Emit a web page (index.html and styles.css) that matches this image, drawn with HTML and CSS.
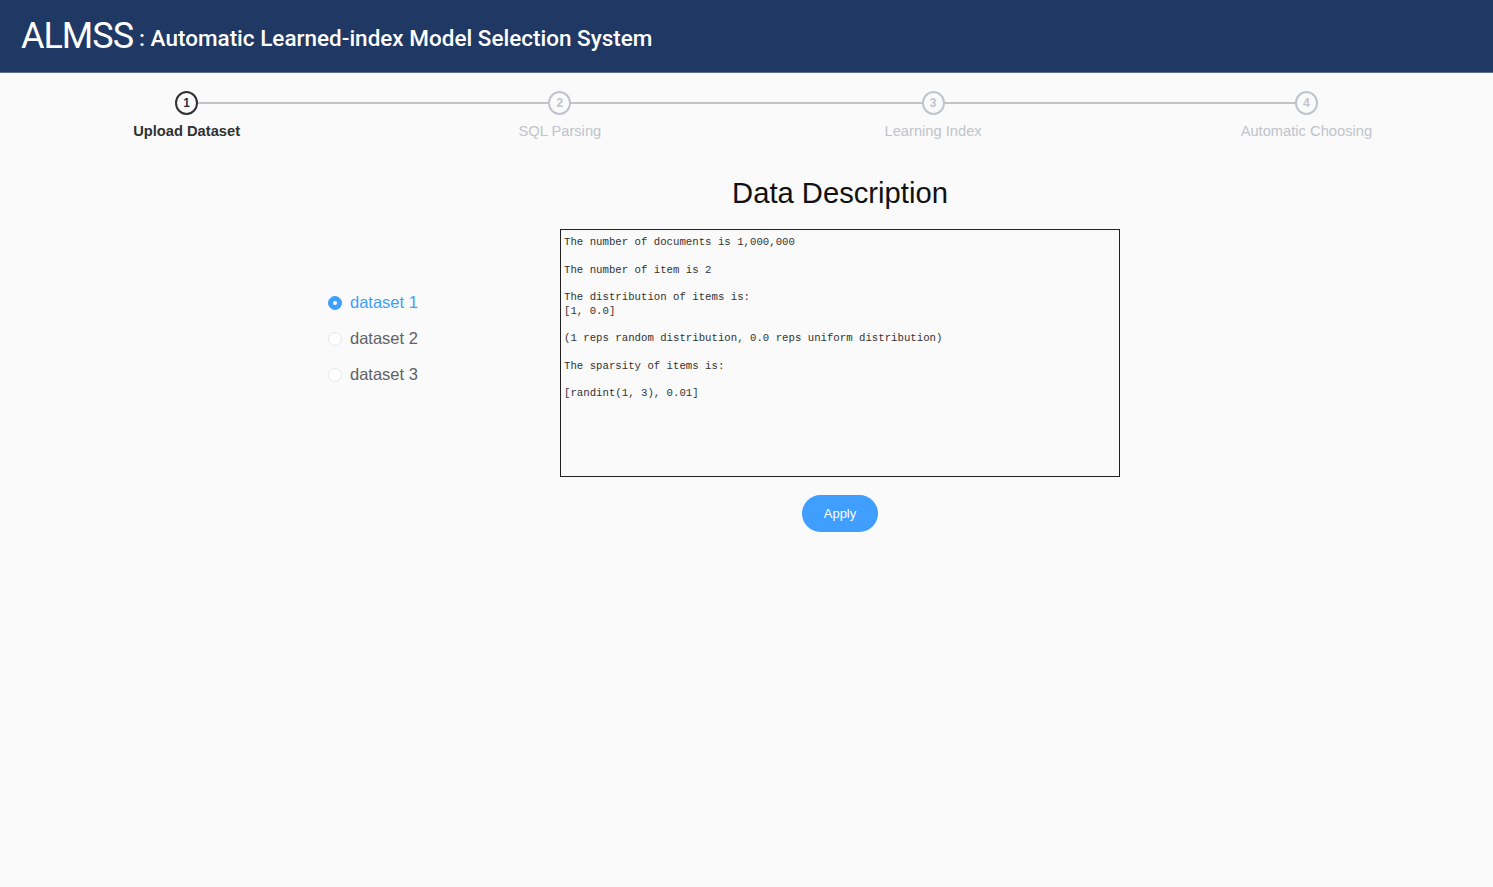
FILE: index.html
```html
<!doctype html>
<html lang="en">
    <head>
        <meta charset="UTF-8" />
        <meta name="viewport" content="width=device-width, initial-scale=1.0" />
        <title>ALMSS</title>
        <link rel="stylesheet" href="styles.css">
    </head>
    <body>
        <header class="top-bar">
            <span class="brand">ALMSS</span>
            <span class="tagline">: Automatic Learned-index Model Selection System</span>
        </header>

        <ol class="steps">
            <li class="step active">
                <span class="step-icon">1</span>
                <span class="step-title">Upload Dataset</span>
            </li>
            <li class="step">
                <span class="step-icon">2</span>
                <span class="step-title">SQL Parsing</span>
            </li>
            <li class="step">
                <span class="step-icon">3</span>
                <span class="step-title">Learning Index</span>
            </li>
            <li class="step">
                <span class="step-icon">4</span>
                <span class="step-title">Automatic Choosing</span>
            </li>
        </ol>

        <main class="content">
            <div class="radio-group">
                <label class="radio checked"><span class="radio-dot"></span>dataset 1</label>
                <label class="radio"><span class="radio-dot"></span>dataset 2</label>
                <label class="radio"><span class="radio-dot"></span>dataset 3</label>
            </div>

            <section class="description">
                <h1>Data Description</h1>
                <pre class="data-box">The number of documents is 1,000,000

The number of item is 2

The distribution of items is:
[1, 0.0]

(1 reps random distribution, 0.0 reps uniform distribution)

The sparsity of items is:

[randint(1, 3), 0.01]</pre>
                <button class="apply-button">Apply</button>
            </section>
        </main>
    </body>
</html>
```

FILE: styles.css
```css
*,
*::before,
*::after {
    margin: 0;
    padding: 0;
    box-sizing: border-box;
}

:root {
    --primary-color: #409eff;
    --header-color: #1f3864;
    --muted-color: #c0c4cc;
    --bg-color: #fafafa;
}

body {
    font-family: "Liberation Sans", Arial, sans-serif;
    background: var(--bg-color);
    min-height: 100vh;
}

/* Header */
.top-bar {
    height: 73px;
    padding-left: 21px;
    background: var(--header-color);
    border-bottom: 1px solid #5a6c8f;
    color: white;
    display: flex;
    align-items: center;
    gap: 6px;
    font-family: Roboto, sans-serif;
}

.brand {
    font-size: 36px;
    line-height: 1;
    letter-spacing: -1px;
}

.tagline {
    font-size: 22.5px;
    font-weight: 500;
    margin-top: 4px;
}

/* Steps */
.steps {
    list-style: none;
    display: flex;
    padding-top: 18px;
}

.step {
    flex: 1;
    position: relative;
    display: flex;
    flex-direction: column;
    align-items: center;
    color: var(--muted-color);
}

.step:not(:last-child)::after {
    content: "";
    position: absolute;
    top: 11px;
    left: 50%;
    width: 100%;
    height: 2px;
    background: #c2c3c8;
}

.step-icon {
    position: relative;
    z-index: 1;
    width: 23px;
    height: 24px;
    border: 2px solid var(--muted-color);
    border-radius: 50%;
    background: var(--bg-color);
    display: flex;
    align-items: center;
    justify-content: center;
    font-size: 12px;
    font-weight: 700;
}

.step-title {
    margin-top: 6px;
    font-size: 14.7px;
    line-height: 20px;
}

.step.active {
    color: #303133;
}

.step.active .step-icon {
    border-color: #303133;
}

.step.active .step-title {
    font-weight: 700;
}

/* Main */
.content {
    display: flex;
    padding-left: 328px;
}

.radio-group {
    width: 232px;
    padding-top: 151px;
    display: flex;
    flex-direction: column;
    gap: 16px;
}

.radio {
    display: flex;
    align-items: center;
    gap: 8px;
    height: 20px;
    font-size: 16.5px;
    color: #606266;
}

.radio-dot {
    width: 14px;
    height: 14px;
    border: 1px solid #e4e7ed;
    border-radius: 50%;
    background: white;
    display: flex;
    align-items: center;
    justify-content: center;
    margin-top: 1px;
}

.radio.checked {
    color: var(--primary-color);
}

.radio.checked .radio-dot {
    background: var(--primary-color);
    border-color: var(--primary-color);
}

.radio.checked .radio-dot::after {
    content: "";
    width: 4px;
    height: 4px;
    border-radius: 50%;
    background: white;
}

.description {
    width: 560px;
    padding-top: 32px;
    display: flex;
    flex-direction: column;
    align-items: center;
}

.description h1 {
    font-size: 29.2px;
    font-weight: 400;
    line-height: 40px;
    color: #111;
}

.data-box {
    width: 100%;
    height: 248px;
    margin-top: 16px;
    padding: 6px 3px;
    border: 1px solid #222;
    font-family: "Liberation Mono", monospace;
    font-size: 10.7px;
    line-height: 13.75px;
    color: #333;
}

.apply-button {
    margin-top: 18px;
    width: 76px;
    height: 37px;
    border: none;
    border-radius: 20px;
    background: var(--primary-color);
    color: white;
    font-family: inherit;
    font-size: 13px;
    cursor: pointer;
}
```
